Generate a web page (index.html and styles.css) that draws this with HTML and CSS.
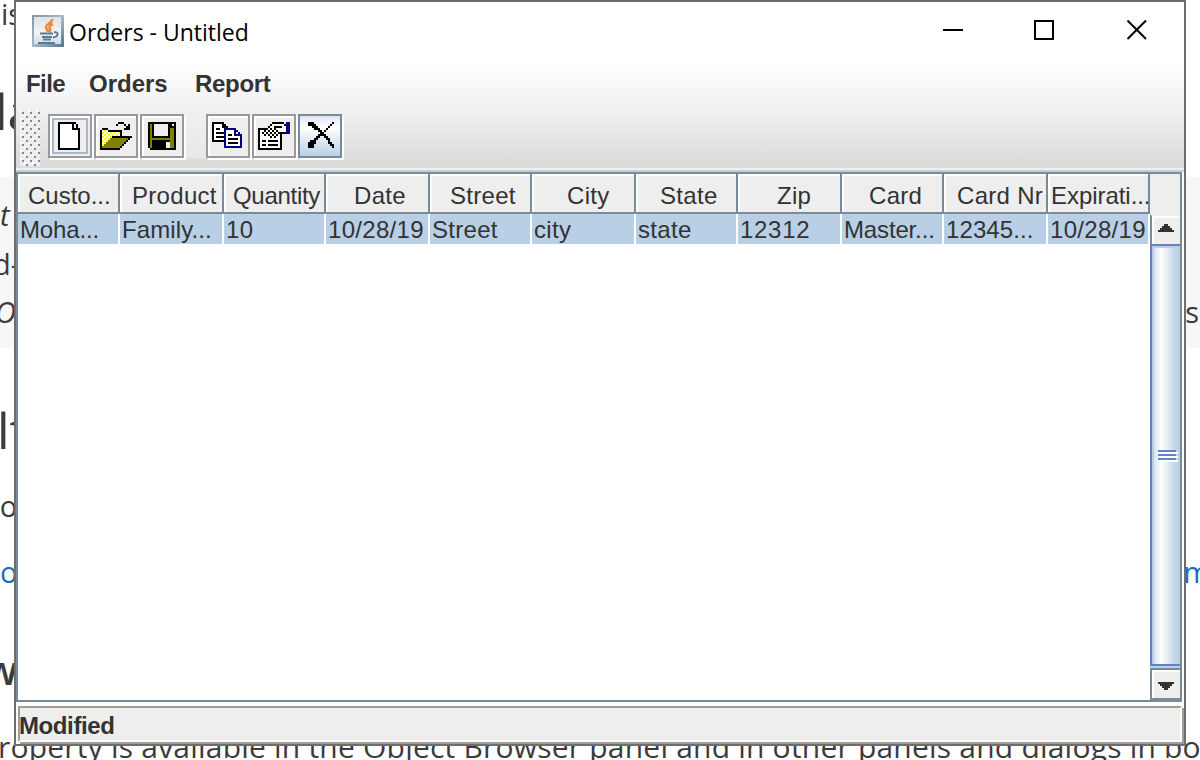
FILE: index.html
```html
<!DOCTYPE html>
<html lang="en">
<head>
<meta charset="utf-8">
<title>Orders - Untitled</title>
<link rel="stylesheet" href="styles.css">
</head>
<body>
<main class="article">
  <p class="line intro">is</p>
  <h1 class="line big">la</h1>
  <div class="note">
    <p class="line"><i>t</i></p>
    <p class="line n2">d-</p>
    <p class="line n3"><i>O</i><span>s</span></p>
  </div>
  <h1 class="line big second">lt</h1>
  <p class="line ro">ro</p>
  <p class="line link"><span>o</span><span>m</span></p>
  <h2 class="line w">w</h2>
  <p class="line last">roperty is available in the Object Browser panel and in other panels and dialogs in bo</p>
</main>

<section class="window">
  <header class="titlebar">
    <svg class="java" viewBox="0 0 32 32">
      <defs><linearGradient id="jb" x2="1" y2="1"><stop stop-color="#8195a5"/><stop offset=".5" stop-color="#a5bac9"/><stop offset="1" stop-color="#52748f"/></linearGradient>
      <linearGradient id="jf" x2="0" y2="1"><stop stop-color="#dde4ea"/><stop offset=".6" stop-color="#f3f3f3"/><stop offset="1" stop-color="#d5dde4"/></linearGradient></defs>
      <rect width="32" height="32" rx="1" fill="url(#jb)"/><rect x="2" y="2" width="27" height="27" fill="url(#jf)"/>
      <path d="M20 4c1 4-6 5-6 8 0 2 2 3 2 5M21 9c-4 2-4 3-3 5 1 1 0 2-1 3" fill="none" stroke="#ec8a3c" stroke-width="2.600"/>
      <path d="M8 18.500h13M10 22h10M11 24.500h8M6 28h17M22 17.500c5-1 5 4-1 5" fill="none" stroke="#587c98" stroke-width="2"/>
    </svg>
    <h1 class="title">Orders - Untitled</h1>
    <svg class="controls" viewBox="0 0 206 22" fill="none" stroke="#000" stroke-width="2"><path d="M0 11H20M92 2H110V20H92Z" shape-rendering="crispEdges"/><path d="M184.500 1.500L203 20M203 1.500L184.500 20"/></svg>
  </header>
  <nav class="menu"><span class="m1">File</span><span class="m2">Orders</span><span class="m3">Report</span></nav>
  <div class="toolbar">
    <svg class="grip" width="20" height="56" shape-rendering="crispEdges"><defs><pattern id="dots" width="8" height="8" patternUnits="userSpaceOnUse"><path d="M0 0h2v2H0zM4 4h2v2H4z" fill="#fff"/><path d="M2 2h2v2H2zM6 6h2v2H6z" fill="#7a8a99"/></pattern></defs><rect width="20" height="56" fill="#eee"/><rect width="20" height="56" fill="url(#dots)"/></svg>
    <button class="tool focus" aria-label="New"><svg viewBox="0 0 16 16"><path d="M3 2h7v3h3v9H3z" fill="#fff"/><path d="M2 1h9v1H3v12h9V5H9V2h1v2h1V3h1v1h1v11H2zM11 2h1v1h-1z" fill="#000"/></svg></button>
    <button class="tool" aria-label="Open"><svg viewBox="0 0 16 16"><path d="M1 5h3v1h6v3H5v1H4v1H3v1H2v1H1z" fill="#ff0"/><path d="M1 5h1v1H1zM3 5h1v1H3zM2 6h1v1H2zM4 6h1v1H4zM6 6h1v1H6zM8 6h1v1H8zM1 7h1v1H1zM3 7h1v1H3zM5 7h1v1H5zM7 7h1v1H7zM9 7h1v1H9zM2 8h1v1H2zM4 8h1v1H4zM1 9h1v1H1zM3 9h1v1H3zM2 10h1v1H2zM1 11h1v1H1z" fill="#fff"/><path d="M5 9h10v1h-1v1h-1v1h-1v1h-1v1H1v-1h1v-1h1v-1h1v-1h1z" fill="#808000"/><path d="M0 5h1V4h3v1h7v3h5v1h-1v1h-1v1h-1v1h-1v1h-1v1h-1v1H0zM1 5v8h1v-1h1v-1h1v-1h1V9h1V8h4V6H4V5zM5 9v1H4v1H3v1H2v1H1v1h9v-1h1v-1h1v-1h1v-1h1V9z" fill="#000" fill-rule="evenodd"/><path d="M9 1h3v1H9zM8 2h1v1H8zM12 2h1v1h-1zM14 2h1v3h-3V4h1V3h1z" fill="#000"/></svg></button>
    <button class="tool" aria-label="Save"><svg viewBox="0 0 16 16"><path d="M1 1h14v14H2v-1H1z" fill="#000"/><path d="M2 2h1v12H2zM12 4h2v10h-2zM3 9h10v1H3z" fill="#808000"/><path d="M4 2h7v6H4zM13 2h1v1h-1zM10 11h2v3h-2z" fill="#eee"/></svg></button>
    <span class="gap"></span>
    <button class="tool" aria-label="Copy"><svg viewBox="0 0 16 16"><path d="M1 2h5v3h3v5H1z" fill="#fff"/><path d="M0 1h6v1h1v1h1v1H5V2H1v8h5v1H0zM2 4h2v1H2zM2 6h4v1H2zM2 8h4v1H2z" fill="#000"/><path d="M7 5h4v3h3v5H7z" fill="#fff"/><path d="M6 4h6v1h1v1h1v1h1v7H6zM7 5v8h7V8h-3V5zM12 6v1h1V6z" fill="#000080" fill-rule="evenodd"/><path d="M8 7h2v1H8zM8 9h5v1H8zM8 11h5v1H8z" fill="#000"/></svg></button>
    <button class="tool" aria-label="Properties"><svg viewBox="0 0 16 16"><path d="M1 5h10v9H1z" fill="#fff"/><path d="M0 4h4v1H1v9h10V7h1v8H0zM2 10h2v1H2zM5 10h5v1H5zM2 12h2v1H2zM5 12h5v1H5z" fill="#000"/><path d="M4 4h1V3h1V2h1V1h6v1h1v4h-2v1h-2v1H9v1H7V8H6V7H3V6h1z" fill="#fff"/><path d="M7 1h6v1H7zM6 2h1v1H6zM13 2h1v1h-1zM5 3h1v1H5zM8 3h4v1H8zM4 4h1v1H4zM6 4h1v1H6zM8 4h1v1H8zM3 5h1v1H3zM5 5h1v1H5zM7 5h1v1H7zM9 5h1v1H9zM2 6h1v1H2zM4 6h1v1H4zM6 6h1v1H6zM8 6h1v1H8zM10 6h4v1h-4zM3 7h1v1H3zM5 7h1v1H5zM7 7h1v1H7zM9 7h1v1H9zM6 8h1v1H6zM8 8h1v1H8z" fill="#000"/><path d="M14 1h2v6h-2z" fill="#000080"/></svg></button>
    <button class="tool armed" aria-label="Delete"><svg viewBox="0 0 16 16"><path d="M2 1h3v1h1v1h1v1h1v1h1v1h1V5h1V4h1V3h1V2h1V1h1v1h-1v1h-1v1h-1v1h-1v1h-1v1h1v1h1v1h1v2h1v1h1v2h-1v-1h-1v-1h-1v-2h-1V9h-1V8H8v1H7v1H6v2H5v2H2v-3h1v-1h2V9h1V8h1V7h1V6H7V5H5V4H4V3H2z" fill="#000"/></svg></button>
  </div>
  <div class="table">
    <div class="row head"><span class="c1">Custo...</span><span class="c2">Product</span><span class="c3">Quantity</span><span class="c4">Date</span><span class="c5">Street</span><span class="c6">City</span><span class="c7">State</span><span class="c8">Zip</span><span class="c9">Card</span><span class="c10">Card Nr</span><span class="c11">Expirati...</span><b class="corner"></b></div>
    <div class="body">
      <div class="row data"><span class="tight">Moha...</span><span class="snug">Family...</span><span>10</span><span>10/28/19</span><span>Street</span><span>city</span><span>state</span><span class="num">12312</span><span class="tight">Master...</span><span class="snug">12345...</span><span>10/28/19</span></div>
      <div class="scroll">
        <div class="arrow up"><svg viewBox="0 0 8 4"><path d="M3 0h2v1h1v1h1v1h1v1H0V3h1V2h1V1h1z"/></svg></div>
        <div class="thumb"><i></i><i></i><i></i></div>
        <div class="arrow down"><svg viewBox="0 0 8 4"><path d="M0 0h8v1H7v1H6v1H5v1H3V3H2V2H1V1H0z"/></svg></div>
      </div>
    </div>
  </div>
  <footer class="status"><span>Modified</span></footer>
</section>
</body>
</html>
```
FILE: styles.css
```css
* { box-sizing: border-box; margin: 0; padding: 0; }
body { width: 1200px; height: 760px; overflow: hidden; position: relative; background: #fff; font-family: "Liberation Sans", Arial, sans-serif; color: #333; }
svg { display: block; }

.article { height: 760px; overflow: hidden; font: 29px/40px "Open Sans", "Noto Sans", sans-serif; color: #3b3b3b; }
.line { white-space: pre; height: 40px; line-height: 40px; font-weight: 400; }
.intro { margin-top: -6px; padding-left: 1px; }
.big { font-size: 50px; height: 60px; line-height: 60px; margin: 47px 0 0 -5px; }
.note { background: #f7f7f7; height: 171px; margin-top: 36px; padding-top: 18px; }
.n2, .n3 { margin-top: 9px; }
.n2 { margin-left: -7px; }
.n3 { display: flex; justify-content: space-between; margin: 8px 1px 0 -5px; }
.big.second { margin-top: 52px; margin-left: -3px; }
.ro { margin: 26px 0 0 -12px; }
.link { display: flex; justify-content: space-between; color: #1f68c8; margin: 26px -10px 0 0; }
.w { font-size: 40px; font-weight: 600; margin: 58px 0 0 -15px; }
.last { font-size: 30px; letter-spacing: .21px; margin: 37px 0 0 -2px; }

.window { position: absolute; left: 14px; top: 0; width: 1172px; height: 746px; border: 2px solid #6e6e6e; background: #fff; display: flex; flex-direction: column; }
.titlebar { height: 60px; display: flex; align-items: flex-start; padding-left: 16px; }
.java { width: 32px; height: 32px; margin-top: 13px; }
.title { font: 400 23px/32px "Open Sans", "Noto Sans", sans-serif; color: #000; margin: 14px 0 0 5px; width: 874px; white-space: nowrap; }
.controls { width: 206px; height: 22px; margin-top: 17px; }

.menu { height: 48px; background: linear-gradient(#fff, #f0f0f0); display: flex; font-weight: 700; font-size: 24px; line-height: 44px; }
.menu span { white-space: nowrap; }
.m1 { margin-left: 10px; width: 63px; letter-spacing: -.6px; }
.m2 { width: 106px; }
.m3 { letter-spacing: -.3px; }
.toolbar { height: 62px; display: flex; padding-left: 4px; background: linear-gradient(#f0f0f0, #dadada 58px, #eee 58px, #eee 60px, #ccc 60px); }
.grip { margin-right: 8px; }
.tool { width: 44px; height: 44px; margin: 4px 2px 0 0; padding: 4px; border: 2px solid #999; background: #eee; box-shadow: 2px 2px #fff, inset 2px 2px #fff; }
.tool svg { width: 32px; height: 32px; shape-rendering: crispEdges; }
.tool.focus { box-shadow: 2px 2px #fff, inset 2px 2px #fff, inset 0 0 0 2px #eee, inset 0 0 0 4px #a3b8cc; }
.tool.armed { border-color: #7a8a99; background: linear-gradient(#dde8f3, #fff 30%, #b8cfe5); box-shadow: 2px 2px #fff; }
.gap { width: 20px; height: 48px; background: linear-gradient(#f0f0f0, #e8e8e8); }

.table { height: 530px; width: 1166px; border: 2px solid #7a8a99; font-size: 24px; }
.row { display: grid; grid-template-columns: 102px 104px 102px 104px 102px 104px 102px 104px 102px 104px 102px 30px; white-space: nowrap; letter-spacing: .3px; }
.head span { height: 40px; line-height: 44px; border-right: 2px solid #7a8a99; border-bottom: 2px solid #7a8a99; background: #eee; box-shadow: inset 2px 2px #fff; overflow: hidden; }
.corner { background: #eee; }
.row .c1 { padding-left: 10px; letter-spacing: 0; } .c2 { padding-left: 12px; }
.row .c3 { padding-left: 9px; letter-spacing: -.3px; } .c4 { padding-left: 28px; }
.c5 { padding-left: 20px; } .c6 { padding-left: 35px; } .c7 { padding-left: 24px; } .c8 { padding-left: 39px; }
.c9 { padding-left: 27px; } .c10 { padding-left: 13px; }
.row .c11 { padding-left: 3px; letter-spacing: -.05px; }
.body { display: flex; height: 486px; }
.data { width: 1132px; height: 30px; grid-template-columns: 102px 104px 102px 104px 102px 104px 102px 104px 102px 104px 102px; }
.data span { height: 30px; line-height: 31px; background: #b8cfe5; border-right: 2px solid #fff; padding-left: 2px; overflow: hidden; }
.data .tight { letter-spacing: -.15px; }
.data .snug { letter-spacing: .1px; }
.data .num { letter-spacing: .7px; }
.scroll { width: 30px; height: 486px; display: flex; flex-direction: column; }
.arrow { border-left: 2px solid #7a8a99; box-shadow: inset 2px 2px #fff; background: #eee; height: 30px; padding: 10px 0 0 6px; }
.up { border-top: 2px solid #eee; }
.up svg { margin-top: -2px; }
.arrow svg { width: 16px; height: 8px; fill: #333; shape-rendering: crispEdges; }
.thumb { height: 422px; border: 2px solid #6382bf; border-right: 0; background: linear-gradient(90deg, #c8daeb, #fff 32%, #c5d8ea 80%, #b8cfe5); box-shadow: inset 2px 2px #b8cfe5, 0 2px #b8cfe5; position: relative; padding: 204px 0 0 6px; }
.thumb i { display: block; width: 18px; height: 2px; margin-bottom: 2px; background: #6382bf; box-shadow: 2px 2px #fff; }
.arrow.down { height: 32px; margin-top: 2px; border-top: 2px solid #7a8a99; border-bottom: 2px solid #7a8a99; padding-top: 12px; }
.status { margin: 4px 0 0 2px; height: 36px; width: 1164px; background: #eee; border: 2px solid; border-color: #a09f91 #fff #fff #a09f91; font: 700 24px/36px "Liberation Sans", Arial, sans-serif; box-shadow: 2px 2px #a09f91; }
.status span { display: block; height: 32px; margin-left: -1px; letter-spacing: -.4px; }
```
